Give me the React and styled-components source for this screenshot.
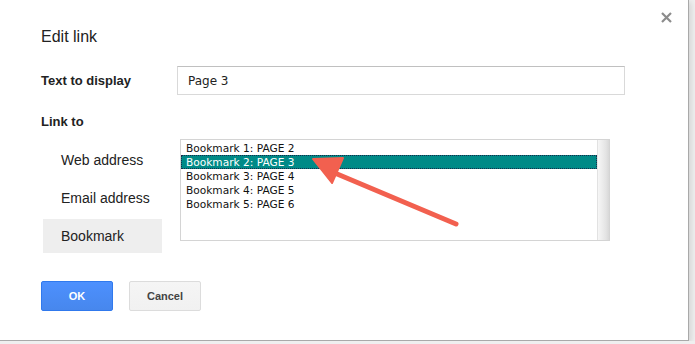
import React from "react";
import styled, { createGlobalStyle } from "styled-components";

const GlobalStyle = createGlobalStyle`
  html, body {
    margin: 0;
    padding: 0;
    background: #efefef;
    font-family: "Liberation Sans", Arial, sans-serif;
  }
`;

const Dialog = styled.div`
  position: relative;
  box-sizing: border-box;
  width: 689px;
  height: 341px;
  background: #fff;
  border-right: 1px solid #a9a9a9;
  border-bottom: 1px solid #a9a9a9;
  box-shadow: 2px 2px 6px rgba(0, 0, 0, 0.12);
  padding: 27px 0 0 41px;
  color: #222;
`;

const Close = styled.div`
  position: absolute;
  top: 8px;
  left: 657px;
  width: 18px;
  height: 18px;
  display: flex;
  align-items: center;
  justify-content: center;
`;

const Title = styled.div`
  font-size: 16px;
  line-height: 20px;
`;

const Row = styled.div`
  display: flex;
  align-items: center;
  margin-top: 19px;
`;

const Label = styled.div`
  font-size: 13px;
  font-weight: bold;
  line-height: 16px;
  width: 136px;
`;

const Input = styled.div`
  box-sizing: border-box;
  width: 448px;
  height: 29px;
  border: 1px solid #d9d9d9;
  border-top-color: #c0c0c0;
  padding: 0 10px;
  display: flex;
  align-items: center;
  font-family: "DejaVu Sans", Verdana, sans-serif;
  font-size: 12px;
  color: #222;
`;

const Section = styled.div`
  margin-top: 19px;
`;

const LinkBody = styled.div`
  display: flex;
  align-items: flex-start;
`;

const Tabs = styled.div`
  display: flex;
  flex-direction: column;
  gap: 4px;
  margin: 13px 0 0 2px;
  width: 119px;
`;

const Tab = styled.div`
  height: 34px;
  display: flex;
  align-items: center;
  padding-left: 18px;
  font-size: 14px;
  color: #222;
  background: ${(p) => (p.$active ? "#eeeeee" : "transparent")};
`;

const ListBox = styled.div`
  box-sizing: border-box;
  margin: 9px 0 0 18px;
  width: 430px;
  height: 102px;
  border: 1px solid #d4d4d4;
  display: flex;
`;

const Items = styled.div`
  flex: 1;
  padding-top: 1px;
`;

const Item = styled.div`
  box-sizing: border-box;
  height: 14px;
  line-height: 12px;
  padding-left: 4px;
  font-family: "DejaVu Sans", Verdana, sans-serif;
  font-size: 10.6px;
  color: ${(p) => (p.$selected ? "#fff" : "#111")};
  background: ${(p) => (p.$selected ? "#008a87" : "transparent")};
  border: 1px ${(p) => (p.$selected ? "dotted #1a2a4a" : "solid transparent")};
  white-space: nowrap;
`;

const Scrollbar = styled.div`
  width: 11px;
  border-left: 1px solid #e2e2e2;
  background: linear-gradient(to right, #f6f6f6, #e4e4e4 70%, #d8d8d8);
`;

const Buttons = styled.div`
  display: flex;
  gap: 16px;
  margin-top: 28px;
`;

const Button = styled.div`
  box-sizing: border-box;
  width: 72px;
  height: 30px;
  display: flex;
  align-items: center;
  justify-content: center;
  border-radius: 2px;
  font-size: 11px;
  font-weight: bold;
  color: ${(p) => (p.$primary ? "#fff" : "#444")};
  background: ${(p) =>
    p.$primary ? "linear-gradient(#4d90fe, #4787ed)" : "linear-gradient(#f5f5f5, #f1f1f1)"};
  border: 1px solid ${(p) => (p.$primary ? "#3079ed" : "#dcdcdc")};
`;

const Arrow = styled.svg`
  position: absolute;
  left: 0;
  top: 0;
  pointer-events: none;
`;

const bookmarks = [
  "Bookmark 1: PAGE 2",
  "Bookmark 2: PAGE 3",
  "Bookmark 3: PAGE 4",
  "Bookmark 4: PAGE 5",
  "Bookmark 5: PAGE 6",
];

export default function App() {
  return (
    <>
      <GlobalStyle />
      <Dialog>
        <Close>
          <svg width="11" height="11" viewBox="0 0 11 11">
            <path d="M1 1 L10 10 M10 1 L1 10" stroke="#8c8c8c" strokeWidth="2.2" />
          </svg>
        </Close>
        <Title>Edit link</Title>
        <Row>
          <Label>Text to display</Label>
          <Input>Page 3</Input>
        </Row>
        <Section>
          <Label>Link to</Label>
          <LinkBody>
            <Tabs>
              <Tab>Web address</Tab>
              <Tab>Email address</Tab>
              <Tab $active>Bookmark</Tab>
            </Tabs>
            <ListBox>
              <Items>
                {bookmarks.map((b, i) => (
                  <Item key={b} $selected={i === 1}>
                    {b}
                  </Item>
                ))}
              </Items>
              <Scrollbar />
            </ListBox>
          </LinkBody>
        </Section>
        <Buttons>
          <Button $primary>OK</Button>
          <Button>Cancel</Button>
        </Buttons>
        <Arrow width="689" height="341">
          <line x1="456" y1="224" x2="330" y2="171" stroke="#f2604f" strokeWidth="5" strokeLinecap="round" />
          <polygon points="313,159 343,158 332,183" fill="#f2604f" stroke="#f2604f" strokeWidth="2" strokeLinejoin="round" />
        </Arrow>
      </Dialog>
    </>
  );
}
